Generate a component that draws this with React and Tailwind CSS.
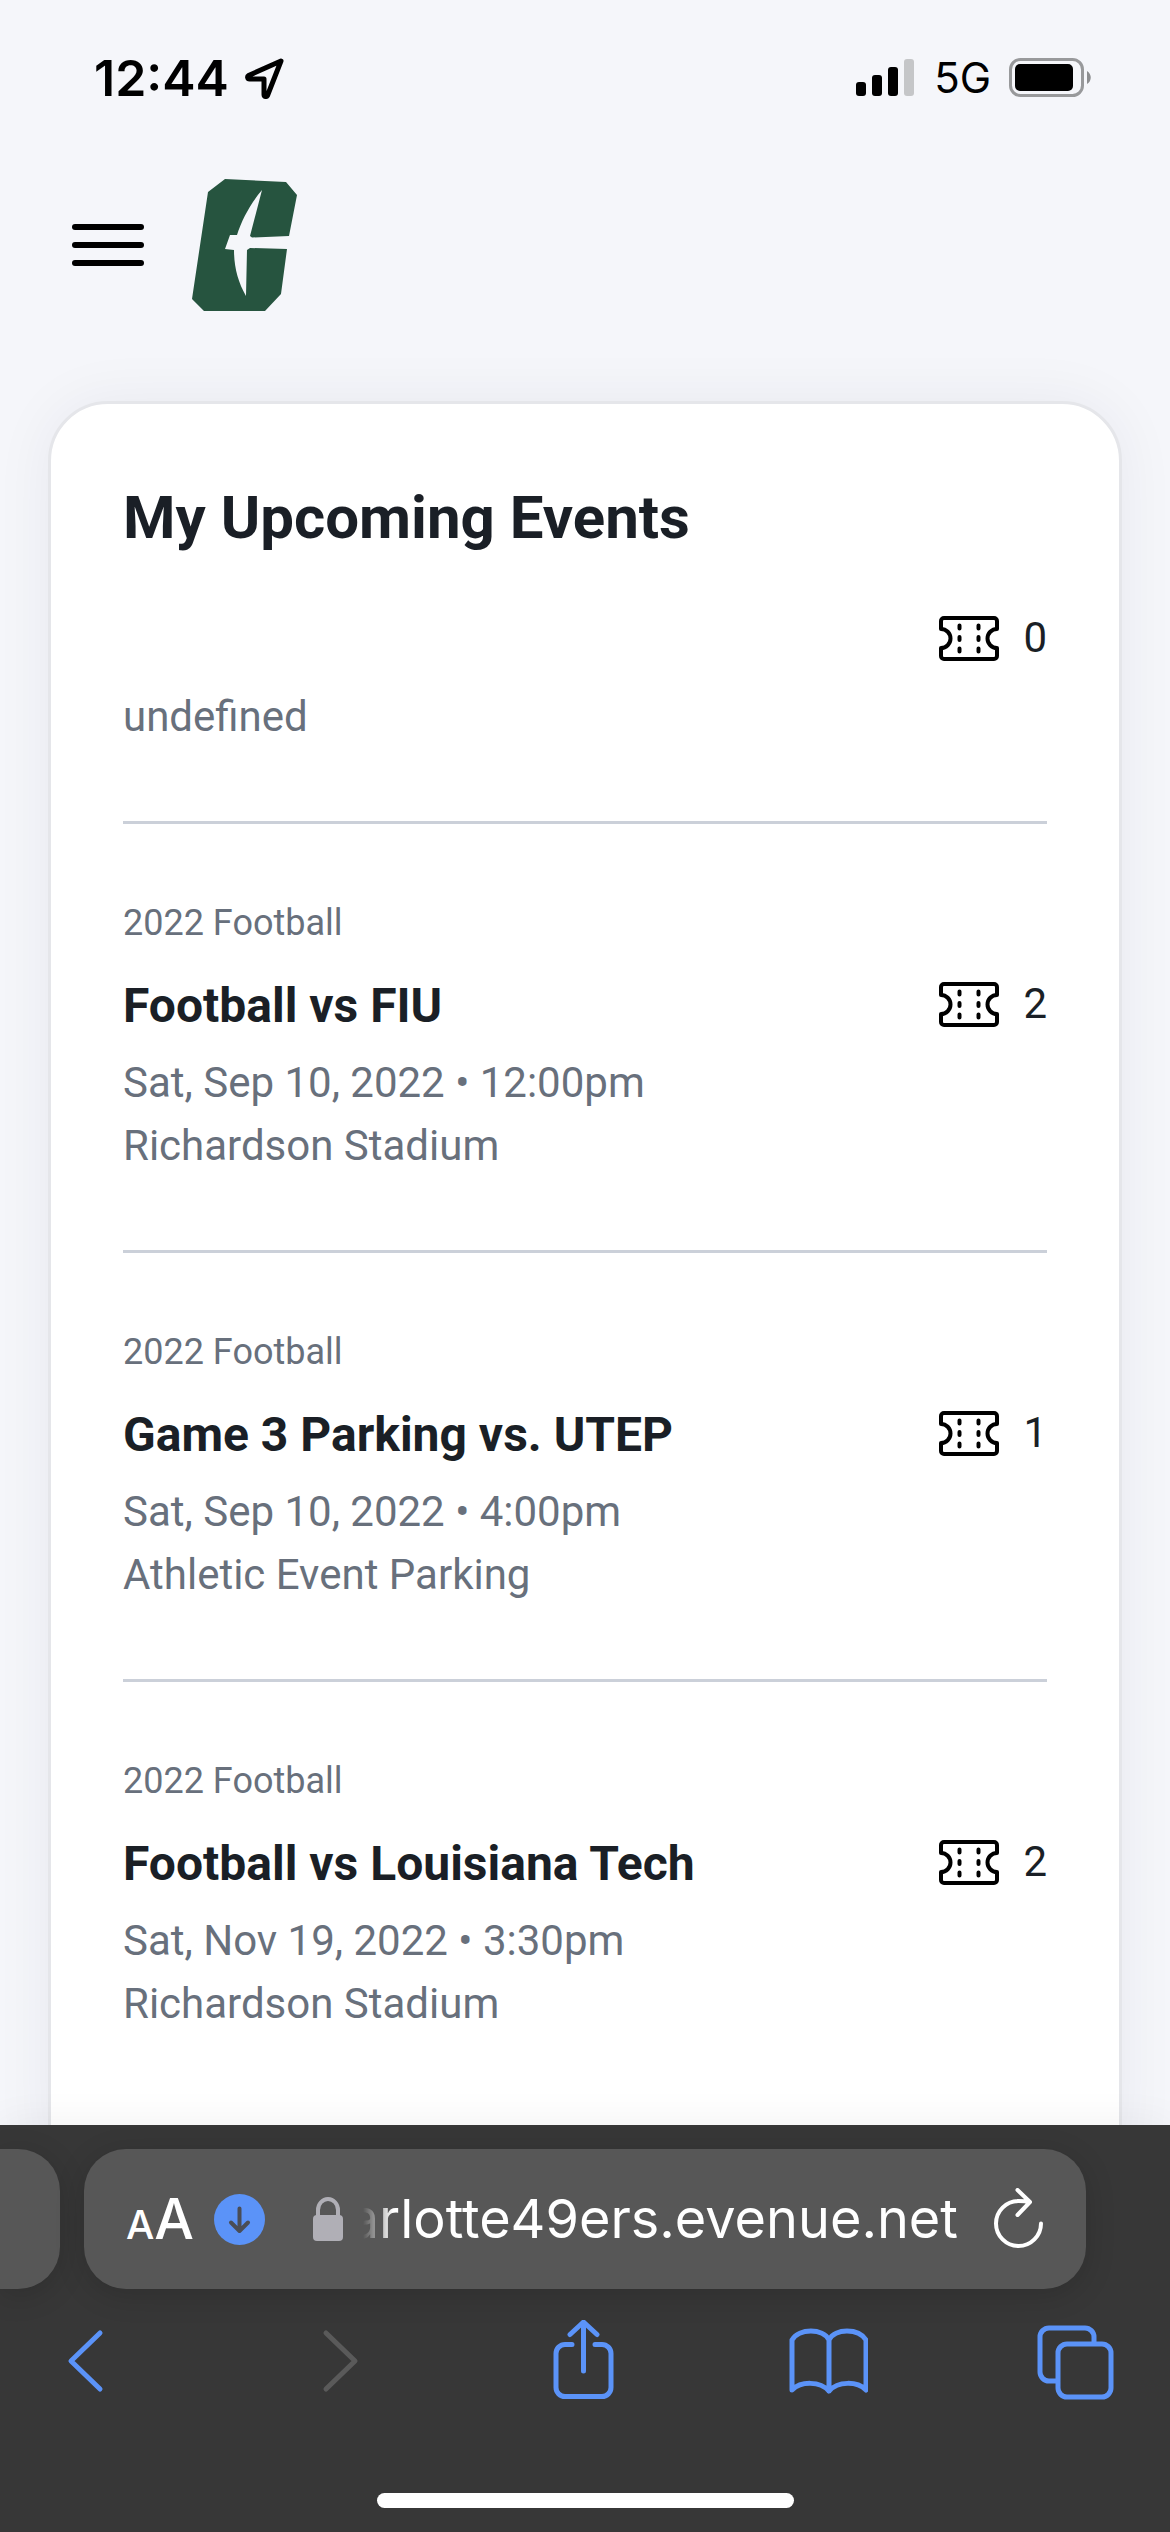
import React from "react";

const events = [
  { id: 0, details: ["undefined"], tickets: 0 },
  {
    id: 1,
    season: "2022 Football",
    title: "Football vs FIU",
    details: ["Sat, Sep 10, 2022 • 12:00pm", "Richardson Stadium"],
    tickets: 2,
  },
  {
    id: 2,
    season: "2022 Football",
    title: "Game 3 Parking vs. UTEP",
    details: ["Sat, Sep 10, 2022 • 4:00pm", "Athletic Event Parking"],
    tickets: 1,
  },
  {
    id: 3,
    season: "2022 Football",
    title: "Football vs Louisiana Tech",
    details: ["Sat, Nov 19, 2022 • 3:30pm", "Richardson Stadium"],
    tickets: 2,
  },
];

function StatusBar() {
  return (
    <div className="flex h-[141px] items-start justify-between pt-12 pr-[78px] pl-[94px] font-['Inter',sans-serif] text-black">
      <div className="flex h-[60px] items-center gap-4">
        <span className="text-[50px] leading-[60px] font-semibold">12:44</span>
        <svg width="40" height="42" viewBox="0 0 40 42" fill="none" stroke="currentColor" strokeWidth="5" strokeLinejoin="round">
          <path d="M36 4 3.500 18.500c-1.500 1-1 3.500 1 3.500H19v15.500c0 2.500 2.500 2.500 3.500 1z" />
        </svg>
      </div>
      <div className="flex h-[60px] items-center">
        <svg width="58" height="38" viewBox="0 0 58 38" fill="currentColor">
          <rect x="0" y="23" width="10" height="14" rx="3" />
          <rect x="16" y="16" width="10" height="21" rx="3" />
          <rect x="32" y="8" width="10" height="29" rx="3" />
          <rect x="48" y="0" width="10" height="37" rx="3" fill="#c5c6c8" />
        </svg>
        <span className="ml-5 text-[42px] leading-[60px]">5G</span>
        <svg className="ml-[18px]" width="83" height="40" viewBox="0 0 83 40">
          <rect x="1.500" y="1.500" width="72" height="36" rx="10" fill="none" stroke="#98999b" strokeWidth="3" />
          <rect x="6" y="6" width="58" height="27" rx="5" />
          <path d="M78 13c5 3 5 10 0 13z" fill="#8d8e90" />
        </svg>
      </div>
    </div>
  );
}

function Header() {
  return (
    <header className="flex h-[208px] items-center gap-12 px-[72px]">
      <button aria-label="Open menu" className="flex w-[72px] flex-col gap-3">
        <span className="h-[6px] rounded-full bg-black" />
        <span className="h-[6px] rounded-full bg-black" />
        <span className="h-[6px] rounded-full bg-black" />
      </button>
      <a href="#home" aria-label="Charlotte 49ers">
        <svg width="105" height="132" viewBox="0 0 105 132">
          <path
            fill="#26543f"
            d="M33 0 94 3l11 13-8 41-37 1.500-2-1.500L70 11C59 24 50 40 45 56h-7l-5 14 9 1c0 17 4 32 12 46l1-46 3-2 37 1-6 45-16 17H12L0 120 16 13z"
          />
        </svg>
      </a>
    </header>
  );
}

function TicketIcon() {
  return (
    <svg width="60" height="45" viewBox="0 0 60 45" fill="none" stroke="#000" strokeWidth="4" strokeLinecap="round" strokeLinejoin="round">
      <path d="M5 2h50a3 3 0 0 1 3 3v8a9.500 9.500 0 0 0 0 19v8a3 3 0 0 1-3 3H5a3 3 0 0 1-3-3v-8a9.500 9.500 0 0 0 0-19V5a3 3 0 0 1 3-3z" />
      <path d="M20.500 9.500v3M20.500 21v3M20.500 32.500v3M39.500 9.500v3M39.500 21v3M39.500 32.500v3" />
    </svg>
  );
}

function EventItem({ event }) {
  return (
    <li className="border-b-[3px] border-[#cbd0d9] pt-[72px] pb-[73px] text-[42px] leading-[63px] text-[#68707c] first:pt-11 last:border-b-0">
      {event.season && <p className="mb-5 text-[36px] leading-[54px]">{event.season}</p>}
      <div className="mb-[9px] flex h-[72px] items-start justify-between">
        <h2 className="text-[48px] leading-[72px] font-bold text-[#1a1f26]">{event.title}</h2>
        <div className="flex items-center gap-6 leading-[68px] text-[#1a1f26]">
          <TicketIcon />
          <span>{event.tickets}</span>
        </div>
      </div>
      {event.details.map((line) => (
        <p key={line}>{line}</p>
      ))}
    </li>
  );
}

function AddressBar() {
  return (
    <div className="flex h-[140px] gap-6 pr-[84px]">
      {/* edge of the previous tab */}
      <div className="w-[60px] shrink-0 rounded-r-[42px] bg-[#575757] shadow-[0_6px_30px_rgba(0,0,0,0.15)]" />
      <div className="flex min-w-0 flex-1 items-center rounded-[42px] bg-[#575757] px-[42px] text-white shadow-[0_6px_30px_rgba(0,0,0,0.15)]">
        <button aria-label="Page settings" className="flex shrink-0 items-baseline pt-[6px] font-medium">
          <span className="text-[40px] leading-[60px]">A</span>
          <span className="text-[56px] leading-[60px]">A</span>
        </button>
        <button aria-label="Downloads" className="ml-5 shrink-0">
          <svg width="51" height="51" viewBox="0 0 51 51" fill="none">
            <circle cx="25.500" cy="25.500" r="25.500" fill="#5b93f8" />
            <path d="M25.500 14.500v22M17 28.500l8.500 8.500 8.500-8.500" stroke="#4a4d55" strokeWidth="4" strokeLinecap="round" strokeLinejoin="round" />
          </svg>
        </button>
        <svg className="ml-12 shrink-0" width="30" height="44" viewBox="0 0 30 44">
          <rect x="0" y="18" width="30" height="26" rx="4" fill="#b0afb6" />
          <path d="M5 20V13a10 11 0 0 1 20 0v7" fill="none" stroke="#b0afb6" strokeWidth="4" />
        </svg>
        {/* long hosts fade out on the left */}
        <button className="ml-5 flex min-w-0 flex-1 justify-end overflow-hidden [mask-image:linear-gradient(to_right,transparent,black_30px)]">
          <span className="text-[54px] leading-[70px] whitespace-nowrap">arlotte49ers.evenue.net</span>
        </button>
        <button aria-label="Reload" className="ml-9 shrink-0">
          <svg width="50" height="62" viewBox="0 0 50 62" fill="none" stroke="currentColor" strokeWidth="4" strokeLinecap="round" strokeLinejoin="round">
            <path d="M47 35.500A22.500 22.500 0 1 1 24.500 13c4 0 7 0 11 1M23.500 2l12.500 12-12.500 13" />
          </svg>
        </button>
      </div>
    </div>
  );
}

function Toolbar() {
  return (
    <nav className="flex items-center justify-between pr-[55px] pl-[45px] text-[#5b93f8]">
      <button aria-label="Back">
        <Glyph d="M55 13 26 41l29 28" />
      </button>
      <button aria-label="Forward" disabled className="text-[#5a5a5a]">
        <Glyph d="M33 13l29 28-29 28" />
      </button>
      <button aria-label="Share">
        <Glyph d="M32 24.500h-7a9 9 0 0 0-9 9v34a9 9 0 0 0 9 9h37a9 9 0 0 0 9-9v-34a9 9 0 0 0-9-9h-7M43.500 51V3M30 14.500 43.500 2 57 14.500" />
      </button>
      <button aria-label="Bookmarks">
        <Glyph d="M41 71V20C35 8 11 8 4 20v50C13 61 32 61 41 71c9-10 28-10 37-1V20C70.500 8 47 8 41 20" />
      </button>
      <button aria-label="Tabs">
        <Glyph d="M59 23V17a9 9 0 0 0-9-9H14a9 9 0 0 0-9 9v35a9 9 0 0 0 9 9h9M32 24h35a9 9 0 0 1 9 9v35a9 9 0 0 1-9 9H32a9 9 0 0 1-9-9V33a9 9 0 0 1 9-9z" />
      </button>
    </nav>
  );
}

function Glyph({ d }) {
  return (
    <svg width="80" height="84" viewBox="0 0 80 84" fill="none" stroke="currentColor" strokeWidth="5" strokeLinecap="round" strokeLinejoin="round">
      <path d={d} />
    </svg>
  );
}

export default function App() {
  return (
    <div className="flex h-screen flex-col bg-[#f5f6fa] font-['Roboto',sans-serif]">
      <StatusBar />
      <Header />
      <main className="min-h-0 flex-1 overflow-hidden px-12 pt-[52px]">
        <section className="rounded-[60px] border-[3px] border-[#e5e6ea] bg-white p-[72px] shadow-[0_0_60px_rgba(30,40,60,0.06)]">
          <h1 className="text-[60px] leading-[84px] font-bold text-[#1a1f26]">My Upcoming Events</h1>
          <ul>
            {events.map((event) => (
              <EventItem key={event.id} event={event} />
            ))}
          </ul>
        </section>
      </main>

      {/* Safari controls */}
      <footer className="relative flex shrink-0 flex-col bg-[#373737] py-6 font-['Inter',sans-serif] shadow-[0_0_40px_rgba(0,0,0,0.06)]">
        <AddressBar />
        <div className="mt-[31px]">
          <Toolbar />
        </div>
        <div className="mt-[89px] h-[15px] w-[417px] self-center rounded-full bg-white" />
      </footer>
    </div>
  );
}
